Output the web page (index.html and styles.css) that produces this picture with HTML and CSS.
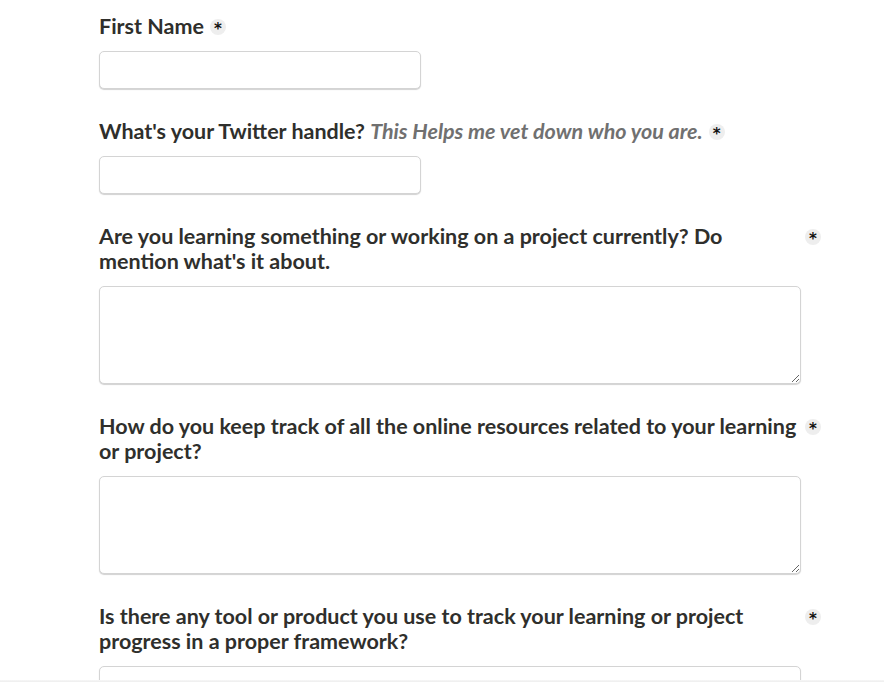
FILE: index.html
```html
<!DOCTYPE html>
<html lang="en">
<head>
    <meta charset="UTF-8">
    <meta name="viewport" content="width=device-width, initial-scale=1.0">
    <title>Learning tracker survey</title>
    <link rel="stylesheet" href="styles.css">
</head>
<body>

    <form class="survey">
        <div class="field">
            <label class="question"><span class="q-text">First Name</span><span class="req">*</span></label>
            <input type="text" class="short">
        </div>

        <div class="field">
            <label class="question"><span class="q-text">What's your Twitter handle? <em class="hint">This Helps me vet down who you are.</em></span><span class="req">*</span></label>
            <input type="text" class="short">
        </div>

        <div class="field">
            <label class="question"><span class="q-text">Are you learning something or working on a project currently? Do mention what's it about.</span><span class="req">*</span></label>
            <textarea></textarea>
        </div>

        <div class="field">
            <label class="question"><span class="q-text">How do you keep track of all the online resources related to your learning or project?</span><span class="req">*</span></label>
            <textarea></textarea>
        </div>

        <div class="field">
            <label class="question"><span class="q-text">Is there any tool or product you use to track your learning or project progress in a proper framework?</span><span class="req">*</span></label>
            <textarea></textarea>
        </div>
    </form>

    <div class="bottom-bar"></div>

</body>
</html>
```

FILE: styles.css
```css
body {
    margin: 0;
    background-color: #fff;
    color: #2f2f2c;
    font-family: 'Lato', 'Liberation Sans', sans-serif;
}

.survey {
    width: 722px;
    padding: 14px 0 0 99px;
}

.field {
    margin-bottom: 30px;
}

.question {
    display: flex;
    align-items: flex-start;
    gap: 6px;
    margin-bottom: 12px;
    font-size: 21.5px;
    font-weight: 700;
    line-height: 25px;
}

.q-text {
    width: 700px;
    max-width: max-content;
}

.hint {
    color: #707070;
    font-style: italic;
}

.req {
    flex: none;
    width: 16px;
    height: 16px;
    margin-top: 5px;
    border-radius: 50%;
    background-color: #eeeeee;
    color: #111;
    font-family: 'DejaVu Sans', sans-serif;
    font-size: 15px;
    line-height: 21px;
    text-align: center;
}

input, textarea {
    display: block;
    box-sizing: border-box;
    margin: 0;
    border: 1px solid #d4d4d4;
    border-radius: 5px;
    box-shadow: 0 1px 1px rgba(0, 0, 0, 0.18);
    background-color: #fff;
    font-family: inherit;
    font-size: 16px;
}

input.short {
    width: 322px;
    height: 38px;
}

textarea {
    width: 702px;
    height: 98px;
}

.bottom-bar {
    position: fixed;
    left: 0;
    right: 0;
    bottom: 0;
    height: 2px;
    background: linear-gradient(#f7f7f7, #eeeeee);
}
```
